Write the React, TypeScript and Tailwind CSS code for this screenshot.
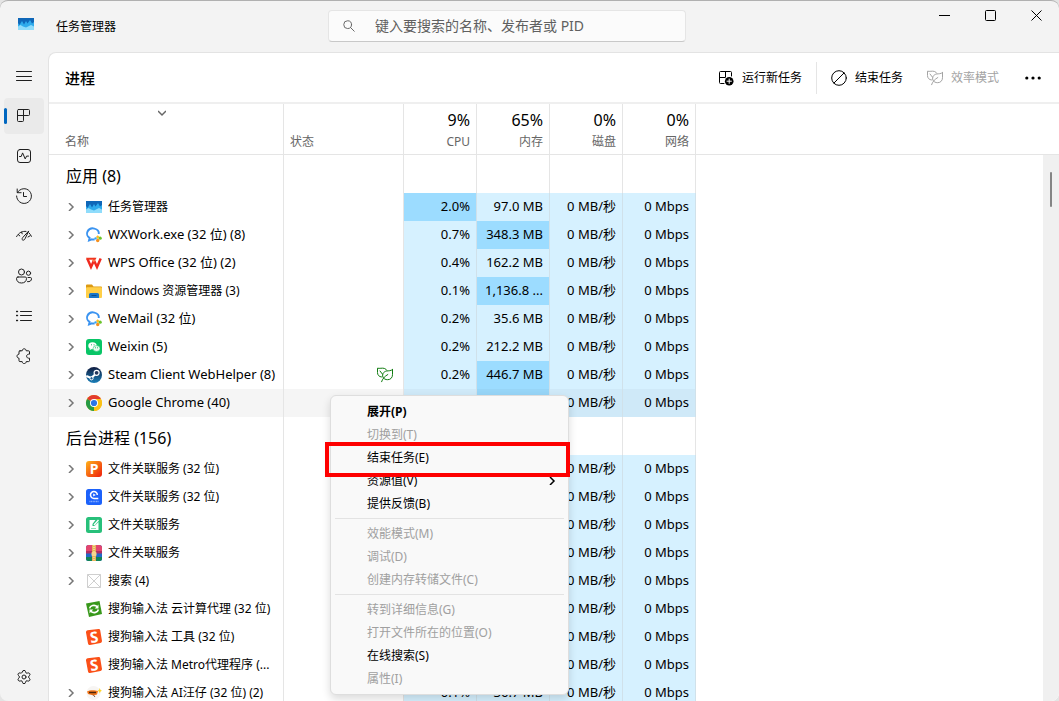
import React, { useState } from 'react';
import { Settings } from 'lucide-react';

interface IconProps {
  className?: string;
}

interface Process {
  name: string;
  icon: React.FC<IconProps>;
  expandable?: boolean;
  wide?: boolean;
  eco?: boolean;
  selected?: boolean;
  cpu?: string;
  cpuHot?: boolean;
  memory?: string;
  memoryHot?: boolean;
}

interface ProcessGroup {
  title: string;
  processes: Process[];
}

interface MenuEntry {
  label: string;
  disabled?: boolean;
  bold?: boolean;
  submenu?: boolean;
}

// ---- line icons ----

const Line: React.FC<{ children: React.ReactNode; className?: string }> = ({ children, className = 'size-4' }) => (
  <svg
    viewBox="0 0 16 16"
    fill="none"
    stroke="currentColor"
    strokeLinecap="round"
    strokeLinejoin="round"
    className={`shrink-0 ${className}`}
    aria-hidden="true"
  >
    {children}
  </svg>
);

const HamburgerIcon = () => (
  <Line>
    <path d="M.5 3.5h15M.5 8.5h15M.5 12.5h15" />
  </Line>
);

const ProcessesIcon = () => (
  <Line>
    <path d="M2.5 1.5h10a1 1 0 0 1 1 1v4a1 1 0 0 1-1 1h-5v5a1 1 0 0 1-1 1h-4a1 1 0 0 1-1-1v-10a1 1 0 0 1 1-1zM7.5 1.5v6M1.5 7.5h6" />
  </Line>
);

const PerformanceIcon = () => (
  <Line>
    <rect x="1.5" y="1.5" width="13" height="13" rx="2.5" />
    <path d="M3.5 8.5h1.7l1.4-3.6 2.6 6 1.4-2.8h1.9" />
  </Line>
);

const HistoryIcon = () => (
  <Line>
    <path d="M1.2 1v3.7h3.9M1.5 4.5A7.4 7.4 0 1 1 .6 8M7.5 4.500v4h3" />
  </Line>
);

const StartupIcon = () => (
  <Line>
    <path d="M.6 8.6C3 4.400 6.400 3 10 3.400M2.300 6.600l1.500 1.300M5.600 4.200l.6 1.600M13 4.900c1 .9 1.800 2 2.400 3.500M12 9l2-1.200" />
    <path d="M12.600 3.300 9 10.800c-.5 1.400-2.300 1.900-2.800.8-.3-.7 0-1.400.6-2.100z" />
  </Line>
);

const UsersIcon = () => (
  <Line>
    <circle cx="5.500" cy="4" r="3" />
    <circle cx="12.500" cy="5.200" r="2.100" />
    <path d="M2 9h7.200a1.300 1.300 0 0 1 1.300 1.300c0 3-2 4.700-5 4.700s-5-1.700-5-4.700A1.400 1.400 0 0 1 2 9zM12 9.500h2.300a1.200 1.200 0 0 1 1.200 1.200c0 2-1.500 3.300-4 3" />
  </Line>
);

const DetailsIcon = () => (
  <Line>
    <path d="M4.500 3.500h11M4.500 7.500h11M4.500 12.500h11" />
    <path d="M.5 3.500h1M.5 7.500h1M.5 12.500h1" strokeWidth="1.400" />
  </Line>
);

const ServicesIcon = () => (
  <Line>
    <path d="M4 2.800h2.200c.1-1.300.9-2 2-2s1.900.7 2 2h2.300a1 1 0 0 1 1 1v2.400c-1.700-.2-2.900.6-2.900 2s1.200 2.200 2.900 2v2.400a1 1 0 0 1-1 1h-2.300c-.1 1.300-.9 2-2 2s-1.900-.7-2-2H4a1 1 0 0 1-1-1v-2.400c-1.300-.1-2-.9-2-2s.7-1.900 2-2V3.800a1 1 0 0 1 1-1z" />
  </Line>
);

const SearchIcon = () => (
  <Line className="size-3">
    <circle cx="6.200" cy="6.200" r="5.200" strokeWidth="1.300" />
    <path d="m10 10 5 5" strokeWidth="1.300" />
  </Line>
);

const RunTaskIcon = () => (
  <Line>
    <path d="M6 13.500H2.500a1 1 0 0 1-1-1v-10a1 1 0 0 1 1-1h10a1 1 0 0 1 1 1V6M7.500 1.500V7M1.500 7.500H7" />
    <circle cx="11.200" cy="11.200" r="4.300" fill="currentColor" stroke="none" />
    <path d="M11.200 9v4.400M9 11.200h4.400" stroke="#fff" />
  </Line>
);

const EndTaskIcon = () => (
  <Line>
    <circle cx="8" cy="8" r="7.300" />
    <path d="M2.900 13.100 13.100 2.900" />
  </Line>
);

const LeafIcon: React.FC<IconProps> = ({ className }) => (
  <Line className={className}>
    <path d="M4.500 10C2 9.800.5 8 .5 5.500V1.200c2 .5 4.800-.4 6.800.2C8.600 1.800 9.400 2.500 9.700 3.200" />
    <path d="M15.500 2.600v5.100c0 3-2 5-4.800 5-2.200 0-4-.9-4.800-2.700C4.900 7.400 6.500 4.500 9.700 4c2-.3 4 0 5.800-1.400zM4.600 14.700c.8-2.700 3-5.400 6.200-7.200M3 4l2.500 3.200" />
  </Line>
);

const MoreIcon = () => (
  <svg viewBox="0 0 16 16" fill="currentColor" className="size-4" aria-hidden="true">
    <circle cx="1.800" cy="8" r="1.600" />
    <circle cx="8" cy="8" r="1.600" />
    <circle cx="14.200" cy="8" r="1.600" />
  </svg>
);

const ChevronIcon: React.FC<IconProps> = ({ className = 'size-2' }) => (
  <svg viewBox="0 0 8 8" fill="none" stroke="currentColor" strokeWidth="1.500" className={className} aria-hidden="true">
    <path d="m2 0 4 4-4 4" />
  </svg>
);

// ---- program icons ----

const Tile: React.FC<{ children: React.ReactNode }> = ({ children }) => (
  <svg viewBox="0 0 16 16" className="size-4 shrink-0 overflow-visible" aria-hidden="true">
    {children}
  </svg>
);

const TaskManagerIcon = () => (
  <Tile>
    <rect y="2" width="16" height="12" fill="#0f67b8" />
    <path d="M0 7l1.500 2L4 5l2 3.500L8 5l1.500 2.500L12 4l2 3.500L16 6v8H0z" fill="#2fabec" />
    <path d="M0 10.500 2.500 9 5 10.500l3 1 3-1.500 2-1 3 1.500V14H0z" fill="#8fdcfb" />
  </Tile>
);

const WxWorkIcon = () => (
  <Tile>
    <path d="M12.800 7A5.900 5.200 0 1 0 3.600 10.900L3 13.500l2.800-1.200c1 .3 2 .3 2.800.1" fill="none" stroke="#3a93f0" strokeWidth="1.900" />
    <path d="M11.700 8.200l1.800 1.900-1.800 1.900-1.800-1.900z" fill="#fbbf24" />
    <circle cx="14.200" cy="11.200" r="1.600" fill="#6cc42c" />
    <circle cx="11.700" cy="13.500" r="1.700" fill="#f6901e" />
    <circle cx="9.500" cy="11.400" r="1.200" fill="#35a4f5" />
  </Tile>
);

const WpsIcon = () => (
  <Tile>
    <path d="M1.300 3.500 5 12l3-6.500L11 12l3.700-8.500" fill="none" stroke="#f0291f" strokeWidth="2.500" />
    <path d="M0 2.800h10.500l-1 2H.9z" fill="#f0361f" />
    <path d="M5.500 4.800h4L8 7.500z" fill="#ff7d50" />
  </Tile>
);

const ExplorerIcon = () => (
  <Tile>
    <path d="M0 2.500a1 1 0 0 1 1-1h5l1.500 2H15a1 1 0 0 1 1 1V8H0z" fill="#dc9a13" />
    <rect y="4.300" width="16" height="10.700" rx="1" fill="#ffcf48" />
    <path d="M3 15v-3.500a1.500 1.500 0 0 1 1.500-1.500h7a1.500 1.500 0 0 1 1.500 1.500V15z" fill="#1976c9" />
    <path d="M5.500 12.500h5" stroke="#0b4c8c" />
  </Tile>
);

const WeixinIcon = () => (
  <Tile>
    <rect width="16" height="16" rx="3" fill="#08c566" />
    <ellipse cx="6.500" cy="6.800" rx="4.200" ry="3.500" fill="#fff" />
    <path d="M4 9.500 3.500 11.300 5.700 10z" fill="#fff" />
    <ellipse cx="10.500" cy="9.500" rx="3.500" ry="2.900" fill="#eafbf1" stroke="#08c566" strokeWidth=".5" />
    <path d="M5 5.800h.9M7.600 5.800h.9M9 8.800h.8M11.200 8.800h.8" stroke="#08a857" />
  </Tile>
);

const SteamIcon = () => (
  <Tile>
    <defs>
      <linearGradient id="steam" x1="0" y1="0" x2="0" y2="1">
        <stop offset="0" stopColor="#101b3f" />
        <stop offset="1" stopColor="#1a7fb8" />
      </linearGradient>
    </defs>
    <circle cx="8" cy="8" r="8" fill="url(#steam)" />
    <path d="M.3 9 5.300 11 9 7.500" fill="none" stroke="#fff" strokeWidth="2" />
    <circle cx="10.600" cy="5.800" r="2.500" fill="#22365c" stroke="#fff" strokeWidth="1.200" />
    <circle cx="5.500" cy="11.300" r="1.600" fill="#1a568c" stroke="#fff" />
  </Tile>
);

const ChromeIcon = () => (
  <Tile>
    <circle cx="8" cy="8" r="8" fill="#fbc116" />
    <path d="M8 8 1.070 4A8 8 0 0 1 14.930 4z" fill="#e33b2e" />
    <path d="M8 8v8A8 8 0 0 1 1.070 4z" fill="#269a45" />
    <path d="M8 4h6.930A8 8 0 0 1 8 16l3.460-6z" fill="#fbc116" />
    <circle cx="8" cy="8" r="4" fill="#fff" />
    <circle cx="8" cy="8" r="3.100" fill="#2a74e8" />
  </Tile>
);

const PdfIcon = () => (
  <Tile>
    <defs>
      <linearGradient id="pdf" x1="0" y1="0" x2="1" y2="1">
        <stop offset="0" stopColor="#ffb31a" />
        <stop offset="1" stopColor="#ee1c0c" />
      </linearGradient>
    </defs>
    <rect width="16" height="16" rx="3" fill="url(#pdf)" />
    <text x="8" y="13" textAnchor="middle" fontSize="14" fontWeight="700" fill="#fff">P</text>
  </Tile>
);

const PlayerIcon = () => (
  <Tile>
    <rect width="16" height="16" rx="2.500" fill="#1c62fb" />
    <path d="M11.300 6A3.400 3.400 0 1 0 8 9.400h4.300" fill="none" stroke="#fff" strokeWidth="1.500" />
    <path d="M7.200 4.400 9.800 6 7.200 7.600z" fill="#fff" />
    <path d="M3.500 12.500h9" stroke="#8fb4ff" strokeWidth="1.400" strokeDasharray="1 .6" />
  </Tile>
);

const EditorIcon = () => (
  <Tile>
    <rect width="16" height="16" rx="2.500" fill="#28c07a" />
    <path d="M3.500 3h6l-3 4v2h2l4-4v8h-9z" fill="#fff" />
    <path d="m8 8 4.500-5" stroke="#fff" strokeWidth="1.400" />
    <path d="M5 11.500h5" stroke="#8be0b7" />
  </Tile>
);

const ArchiveIcon = () => (
  <Tile>
    <rect width="16" height="16" rx="2.500" fill="#2268c9" />
    <path d="M0 6V2.500A2.500 2.500 0 0 1 2.500 0h11A2.500 2.500 0 0 1 16 2.500V6z" fill="#e2456f" />
    <path d="M0 6h16v2.500H0z" fill="#b02e62" />
    <path d="M0 12h16v1.500a2.500 2.500 0 0 1-2.500 2.500h-11A2.500 2.500 0 0 1 0 13.500z" fill="#128456" />
    <path d="M6 0h4v16H6z" fill="#e5b45c" />
    <path d="M8 0v16" stroke="#fff0c2" strokeDasharray="1 1" />
    <rect x="5.500" y="7" width="5" height="4" rx="1" fill="#f7d78e" />
  </Tile>
);

const BlankIcon = () => (
  <Tile>
    <path d="M1.500 1.500h13v13h-13zM1.500 1.500l13 13M14.500 1.500l-13 13" fill="none" stroke="#cfcfcf" />
  </Tile>
);

const SogouCloudIcon = () => (
  <Tile>
    <path d="M0 2.500 13.500 0 16 13 3 16z" fill="#38981b" />
    <path d="M3.600 7.300C4.200 4.600 8.500 3.200 11.300 5.700M12.400 8.500c-.6 2.900-4.700 4.200-7.600 1.800" fill="none" stroke="#fff" strokeWidth="1.600" />
    <path d="M12.500 3.500v3.900H8.700zM3.500 12.300V8.600h3.800z" fill="#fff" />
  </Tile>
);

const SogouIcon = () => (
  <Tile>
    <path d="M0 3.500a2 2 0 0 1 1.500-2.200L12.500 0a1.500 1.500 0 0 1 1.700 1.200L16 12a2 2 0 0 1-1.500 2L4 16a1.600 1.600 0 0 1-2-1.400z" fill="#fb5018" />
    <text x="8" y="13.500" textAnchor="middle" fontSize="15" fontWeight="700" fill="#fff" transform="rotate(-8 8 8)">S</text>
  </Tile>
);

const SogouDogIcon = () => (
  <Tile>
    <circle cx="7.500" cy="8" r="7" fill="#f7f5f3" />
    <path d="M1 6.500C4 4.500 9 5 12 6l-1 3.500-3.500 1L2 9z" fill="#f47416" />
    <path d="M3 7.500h7" stroke="#4c2408" strokeWidth="1.400" />
    <path d="M7 9.500 9 12" stroke="#7a5a48" />
    <path d="m13.800 3 .7 2 1.500.7-1.500.8-.7 2-.7-2-1.600-.8 1.600-.7z" fill="#ffd21c" />
  </Tile>
);

// ---- data ----

const groups: ProcessGroup[] = [
  {
    title: '应用 (8)',
    processes: [
      { name: '任务管理器', icon: TaskManagerIcon, expandable: true, cpu: '2.0%', cpuHot: true, memory: '97.0 MB' },
      { name: 'WXWork.exe (32 位) (8)', icon: WxWorkIcon, expandable: true, wide: true, cpu: '0.7%', memory: '348.3 MB', memoryHot: true },
      { name: 'WPS Office (32 位) (2)', icon: WpsIcon, expandable: true, wide: true, cpu: '0.4%', memory: '162.2 MB' },
      { name: 'Windows 资源管理器 (3)', icon: ExplorerIcon, expandable: true, cpu: '0.1%', memory: '1,136.8 ...', memoryHot: true },
      { name: 'WeMail (32 位)', icon: WxWorkIcon, expandable: true, wide: true, cpu: '0.2%', memory: '35.6 MB' },
      { name: 'Weixin (5)', icon: WeixinIcon, expandable: true, wide: true, cpu: '0.2%', memory: '212.2 MB' },
      { name: 'Steam Client WebHelper (8)', icon: SteamIcon, expandable: true, wide: true, eco: true, cpu: '0.2%', memory: '446.7 MB', memoryHot: true },
      { name: 'Google Chrome (40)', icon: ChromeIcon, expandable: true, wide: true, selected: true, memoryHot: true },
    ],
  },
  {
    title: '后台进程 (156)',
    processes: [
      { name: '文件关联服务 (32 位)', icon: PdfIcon, expandable: true },
      { name: '文件关联服务 (32 位)', icon: PlayerIcon, expandable: true },
      { name: '文件关联服务', icon: EditorIcon, expandable: true },
      { name: '文件关联服务', icon: ArchiveIcon, expandable: true },
      { name: '搜索 (4)', icon: BlankIcon, expandable: true },
      { name: '搜狗输入法 云计算代理 (32 位)', icon: SogouCloudIcon },
      { name: '搜狗输入法 工具 (32 位)', icon: SogouIcon },
      { name: '搜狗输入法 Metro代理程序 (...', icon: SogouIcon },
      { name: '搜狗输入法 AI汪仔 (32 位) (2)', icon: SogouDogIcon, expandable: true, cpu: '0.1%', memory: '36.7 MB' },
    ],
  },
];

const navItems = [
  { label: '进程', icon: ProcessesIcon },
  { label: '性能', icon: PerformanceIcon },
  { label: '应用历史记录', icon: HistoryIcon },
  { label: '启动应用', icon: StartupIcon },
  { label: '用户', icon: UsersIcon },
  { label: '详细信息', icon: DetailsIcon },
  { label: '服务', icon: ServicesIcon },
];

const usage = [
  { label: 'CPU', value: '9%' },
  { label: '内存', value: '65%' },
  { label: '磁盘', value: '0%' },
  { label: '网络', value: '0%' },
];

const menuSections: MenuEntry[][] = [
  [
    { label: '展开(P)', bold: true },
    { label: '切换到(T)', disabled: true },
    { label: '结束任务(E)' },
    { label: '资源值(V)', submenu: true },
    { label: '提供反馈(B)' },
  ],
  [
    { label: '效能模式(M)', disabled: true },
    { label: '调试(D)', disabled: true },
    { label: '创建内存转储文件(C)', disabled: true },
  ],
  [
    { label: '转到详细信息(G)', disabled: true },
    { label: '打开文件所在的位置(O)', disabled: true },
    { label: '在线搜索(S)' },
    { label: '属性(I)', disabled: true },
  ],
];

// ---- layout ----

const TitleBar = () => (
  <header className="flex h-[51px] shrink-0 items-start">
    <div className="flex w-[328px] items-center gap-[22px] pt-3.5 pl-[18px]">
      <div className="pb-1.5">
        <TaskManagerIcon />
      </div>
      <h1 className="text-xs leading-6">任务管理器</h1>
    </div>
    <label className="mt-[9px] flex h-8 max-w-[358px] flex-1 items-center gap-5 rounded border border-[#e5e5e5] border-b-[#c8c8c8] bg-[#fbfbfb] px-3.5 text-[#666]">
      <SearchIcon />
      <input
        type="text"
        aria-label="搜索"
        placeholder="键入要搜索的名称、发布者或 PID"
        className="min-w-0 flex-1 bg-transparent text-sm outline-none placeholder:text-[#606060]"
      />
    </label>
    <div className="ml-auto flex">
      <button aria-label="最小化" className="flex h-7 w-[45px] items-center justify-center">
        <svg viewBox="0 0 11 11" className="size-[11px]" stroke="#000" aria-hidden="true">
          <path d="M0 5.500h11" />
        </svg>
      </button>
      <button aria-label="最大化" className="flex h-7 w-[46px] items-center justify-center">
        <svg viewBox="0 0 11 11" className="size-[11px]" fill="none" stroke="#000" aria-hidden="true">
          <rect x=".5" y=".5" width="10" height="10" rx="1" />
        </svg>
      </button>
      <button aria-label="关闭" className="flex h-7 w-[46px] items-center justify-center">
        <svg viewBox="0 0 11 11" className="size-[11px]" stroke="#000" aria-hidden="true">
          <path d="M.5.5l10 10M10.500.5l-10 10" />
        </svg>
      </button>
    </div>
  </header>
);

const Sidebar = () => {
  const [active, setActive] = useState('进程');

  return (
    <nav className="flex w-12 shrink-0 flex-col gap-1 px-1 pt-1.5 pb-1.5 text-[#1f1f1f]">
      <button aria-label="打开导航" className="flex h-9 w-10 items-center justify-center">
        <HamburgerIcon />
      </button>
      {navItems.map(({ label, icon: Icon }) => (
        <button
          key={label}
          aria-label={label}
          onClick={() => setActive(label)}
          className={`relative flex h-9 w-10 items-center justify-center rounded ${active === label ? 'bg-[#eaeaea]' : ''}`}
        >
          {active === label && <span className="absolute top-2.5 left-0 h-4 w-[3px] rounded-full bg-[#0067c0]" />}
          <Icon />
        </button>
      ))}
      <button aria-label="设置" className="mt-auto flex h-9 w-10 items-center justify-center">
        <Settings className="size-4" strokeWidth={1.5} />
      </button>
    </nav>
  );
};

const Toolbar = () => (
  <div className="flex h-[51px] shrink-0 items-center border-b-2 border-[#efefef] pr-[18px] pl-4 text-xs">
    <h2 className="text-[15px] font-medium">进程</h2>
    <button className="ml-auto flex items-center gap-2">
      <RunTaskIcon />
      运行新任务
    </button>
    <span className="mr-3.5 ml-3.5 h-8 w-px bg-[#e5e5e5]" />
    <button className="flex items-center gap-2">
      <EndTaskIcon />
      结束任务
    </button>
    <button disabled className="ml-6 flex items-center gap-2 text-[#a3a3a3]">
      <LeafIcon />
      效率模式
    </button>
    <button aria-label="更多" className="ml-[26px]">
      <MoreIcon />
    </button>
  </div>
);

const ProcessRow: React.FC<{ process: Process }> = ({ process }) => {
  const { name, icon: Icon, expandable, wide, eco, selected, cpu, cpuHot, memory, memoryHot } = process;
  const cool = selected ? 'bg-[#cfe9f8]' : 'bg-[#d6f1ff]';
  const hot = selected ? 'bg-[#97d5f7]' : 'bg-[#9cdcff]';
  const plain = selected ? 'bg-[#f5f5f5]' : '';
  const heat = 'h-7 overflow-hidden border-r border-[#d0e1ea] pr-1.5 pb-0.5 text-right text-[13px] leading-5';

  return (
    <tr>
      <td className={`h-7 border-r border-[#e5e5e5] ${plain}`}>
        <div className="flex items-center pl-4">
          {expandable ? (
            <button aria-label="展开" className="mr-[9px] flex w-3 justify-center text-[#767676]">
              <ChevronIcon />
            </button>
          ) : (
            <span className="mr-[9px] w-3" />
          )}
          <Icon />
          <span className={`ml-1.5 leading-5 ${wide ? 'pb-0.5 text-[13px]' : 'text-xs'}`}>{name}</span>
        </div>
      </td>
      <td className={`border-r border-[#e5e5e5] ${plain}`}>
        {eco && (
          <div className="flex justify-end pr-2.5 text-[#107c10]">
            <LeafIcon />
          </div>
        )}
      </td>
      <td className={`${heat} ${cpuHot ? hot : cool}`}>{cpu}</td>
      <td className={`${heat} ${memoryHot ? hot : cool}`}>{memory}</td>
      <td className={`${heat} ${cool}`}>0 MB/秒</td>
      <td className={`${heat} ${cool}`}>0 Mbps</td>
      <td />
    </tr>
  );
};

const ProcessTable = () => (
  <div className="relative min-h-0 flex-1 overflow-hidden">
    <table className="w-full table-fixed border-separate border-spacing-0 whitespace-nowrap">
      <colgroup>
        <col className="w-[235px]" />
        <col className="w-[120px]" />
        <col className="w-[73px]" />
        <col className="w-[73px]" />
        <col className="w-[73px]" />
        <col className="w-[73px]" />
        <col />
      </colgroup>
      <thead>
        <tr className="text-xs text-[#666]">
          <th className="h-[51px] border-r border-b border-[#e5e5e5] p-0 text-left font-normal">
            <div className="flex h-[50px] flex-col justify-between pt-[5px] pb-0.5 pl-4">
              <ChevronIcon className="mr-6 size-2 rotate-90 self-center" />
              <span className="leading-5">名称</span>
            </div>
          </th>
          <th className="border-r border-b border-[#e5e5e5] pb-0.5 pl-1.5 text-left align-bottom leading-5 font-normal">状态</th>
          {usage.map(({ label, value }) => (
            <th key={label} className="border-r border-b border-[#e5e5e5] pr-1.5 pb-0.5 text-right align-bottom font-normal">
              <div className="text-base leading-6 text-black">{value}</div>
              <div className="leading-5">{label}</div>
            </th>
          ))}
          <th className="border-b border-[#e5e5e5]" />
        </tr>
      </thead>
      {groups.map(group => (
        <tbody key={group.title}>
          <tr>
            <td className="h-[38px] border-r border-[#e5e5e5] pt-1 pl-[17px] text-base leading-6">{group.title}</td>
            <td className="border-r border-[#e5e5e5]" />
            <td className="border-r border-[#e5e5e5]" />
            <td className="border-r border-[#e5e5e5]" />
            <td className="border-r border-[#e5e5e5]" />
            <td className="border-r border-[#e5e5e5]" />
            <td />
          </tr>
          {group.processes.map((process, i) => (
            <ProcessRow key={i} process={process} />
          ))}
        </tbody>
      ))}
    </table>
    <div className="absolute top-[51px] right-0 bottom-0 w-4 bg-[#f0f0f0] pt-[17px]">
      <div className="ml-[7px] h-[35px] w-0.5 rounded-full bg-[#858585]" />
    </div>
  </div>
);

const ContextMenu = () => (
  <div
    role="menu"
    className="absolute top-[394px] left-[330px] w-[239px] rounded-md border border-[#dedede] bg-[#f9f9f9] py-1 text-xs shadow-[0_4px_8px_rgba(0,0,0,0.14)]"
  >
    {menuSections.map((section, i) => (
      <div key={i}>
        {i > 0 && <hr className="mx-1 my-[3px] border-[#e3e3e3]" />}
        {section.map(({ label, disabled, bold, submenu }) => (
          <button
            key={label}
            role="menuitem"
            disabled={disabled}
            className={`flex h-[23px] w-full items-center justify-between pr-3 pl-9 ${disabled ? 'text-[#a0a0a0]' : ''} ${bold ? 'font-bold' : ''}`}
          >
            {label}
            {submenu && <ChevronIcon />}
          </button>
        ))}
      </div>
    ))}
    <div className="pointer-events-none absolute top-[46px] -right-0.5 -left-1.5 h-[35px] border-4 border-[#fe0000]" />
  </div>
);

const App = () => (
  <div className="h-screen bg-[#e4e4e4]">
    <div className="relative flex h-full flex-col overflow-hidden rounded-lg border-t border-[#b0b0b0] bg-[#f3f3f3] font-['Noto_Sans','Noto_Sans_CJK_SC',sans-serif] text-black">
      <TitleBar />
      <div className="flex min-h-0 flex-1">
        <Sidebar />
        <main className="flex min-w-0 flex-1 flex-col overflow-hidden rounded-tl-lg border-t border-l border-[#e3e3e3] bg-white">
          <Toolbar />
          <ProcessTable />
        </main>
      </div>
      <ContextMenu />
    </div>
  </div>
);

export default App;
